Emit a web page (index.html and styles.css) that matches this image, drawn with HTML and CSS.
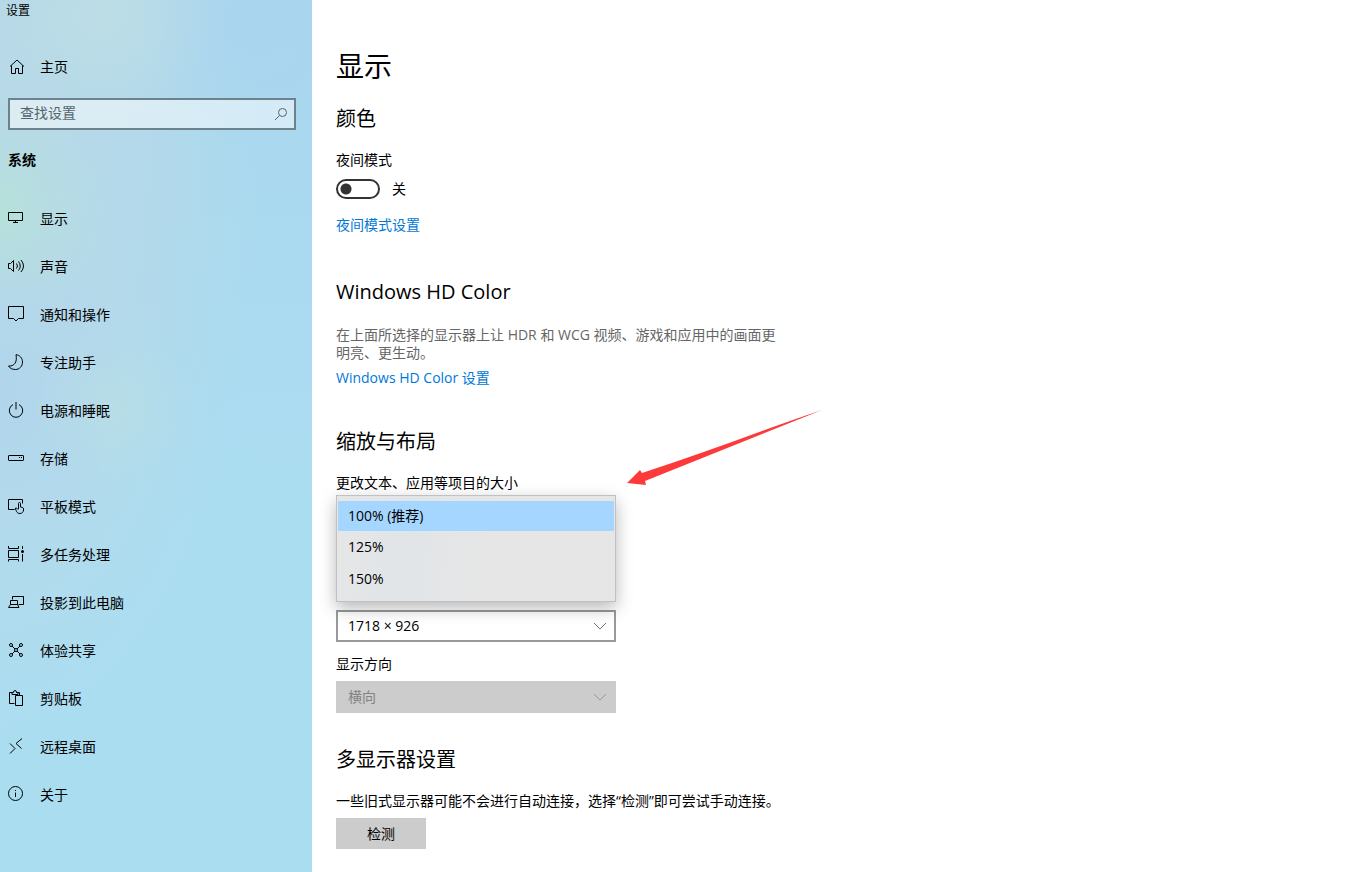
FILE: index.html
```html
<!DOCTYPE html>
<html lang="zh-CN">
<head>
<meta charset="utf-8">
<meta name="viewport" content="width=device-width, initial-scale=1">
<title>设置</title>
<link rel="stylesheet" href="styles.css">
</head>
<body>
<div class="app">
  <aside class="sidebar">
    <div class="window-title">设置</div>
    <a class="nav-link home" href="#">
      <svg class="icon" viewBox="0 0 18 18"><path d="M2 8.500L9 2l7 6.500M3.500 7.500v8h4v-5h3v5h4v-8"/></svg>
      <span>主页</span>
    </a>
    <div class="search">
      <input class="search-input" type="text" placeholder="查找设置" aria-label="查找设置">
      <svg class="search-icon" viewBox="0 0 14 14"><circle cx="8.500" cy="5.500" r="4"/><path d="M5.500 8.500L1 13"/></svg>
    </div>
    <h2 class="nav-heading">系统</h2>
    <nav class="nav">
      <a class="nav-link" href="#">
        <svg class="icon" viewBox="0 0 18 18"><path d="M.5 2.500h14v8H.5zM7.500 10.500v2M5 12.500h5"/></svg>
        <span>显示</span>
      </a>
      <a class="nav-link" href="#">
        <svg class="icon" viewBox="0 0 18 18"><path d="M.5 5.500h2l3-3v11l-3-3h-2zM8.500 5.500q2 2.500 0 5M10.500 3.500q3.500 4.500 0 9M13 2q5 6 0 12"/></svg>
        <span>声音</span>
      </a>
      <a class="nav-link" href="#">
        <svg class="icon" viewBox="0 0 18 18"><path d="M.5.5h15v12h-5L8 15l-2.500-2.500h-5z"/></svg>
        <span>通知和操作</span>
      </a>
      <a class="nav-link" href="#">
        <svg class="icon" viewBox="0 0 18 18"><path d="M8 .7C12 1 14.500 4.500 14.500 8c0 4.200-3 7.500-7 7.500-3 0-5.500-1-7-3.500 5.500.5 9-3.500 7.500-11.300z"/></svg>
        <span>专注助手</span>
      </a>
      <a class="nav-link" href="#">
        <svg class="icon" viewBox="0 0 18 18"><path d="M5 2.600A6.700 6.700 0 1 0 11 2.600M8 0v7.500"/></svg>
        <span>电源和睡眠</span>
      </a>
      <a class="nav-link" href="#">
        <svg class="icon" viewBox="0 0 18 18"><rect x=".5" y="5.500" width="15" height="5" rx=".5"/><path d="M11 7.500h1M13 7.500h1"/></svg>
        <span>存储</span>
      </a>
      <a class="nav-link" href="#">
        <svg class="icon" viewBox="0 0 18 18"><path d="M6.500 11.500h-6v-10h14v4M10.500 11V5.500q0-1 1-1t1 1V9l2 .5q1 .3 1 1.500v1c0 2-1.500 3.500-3.500 3.500s-3-1-3.500-2l-1-2.500q-.3-1.500 1-1l1.500 1.500"/></svg>
        <span>平板模式</span>
      </a>
      <a class="nav-link" href="#">
        <svg class="icon" viewBox="0 0 18 18"><path d="M.5 0v2.500h10V0M.5 4.500h10v7H.5zM.5 15.500v-2h10v2M14.500 0v3M14.500 8v7.500"/><circle class="solid" cx="14.500" cy="5.500" r="1.500"/></svg>
        <span>多任务处理</span>
      </a>
      <a class="nav-link" href="#">
        <svg class="icon" viewBox="0 0 18 18"><path d="M4.500 5.500v-3h11v8h-5M2.500 10.500v-4h7v4M.5 13.500l2-3h7l1.500 3z"/></svg>
        <span>投影到此电脑</span>
      </a>
      <a class="nav-link" href="#">
        <svg class="icon" viewBox="0 0 18 18"><circle cx="3" cy="3" r="1.500"/><circle cx="13" cy="3" r="1.500"/><circle cx="3" cy="13" r="1.500"/><circle cx="13" cy="13" r="1.500"/><circle cx="8" cy="8" r="1.500"/><path d="M4 4l3 3M12 4L9 7M4 12l3-3M12 12L9 9"/></svg>
        <span>体验共享</span>
      </a>
      <a class="nav-link" href="#">
        <svg class="icon" viewBox="0 0 18 18"><path d="M6.500 13.500h-5v-11h3M8.500 2.500h3v3M4 4.500v-2h1.500q0-2 1.500-2t1.500 2H10v2zM7.500 5.500h7v10h-7z"/></svg>
        <span>剪贴板</span>
      </a>
      <a class="nav-link" href="#">
        <svg class="icon" viewBox="0 0 18 18"><path d="M2 5.500L7 10.500l-5 5M14 .5L8 5.500l5.500 5"/></svg>
        <span>远程桌面</span>
      </a>
      <a class="nav-link" href="#">
        <svg class="icon" viewBox="0 0 18 18"><circle cx="7.500" cy="7.500" r="7"/><path d="M7.500 6.500V11M7.500 4v1"/></svg>
        <span>关于</span>
      </a>
    </nav>
  </aside>

  <main class="content">
    <h1 class="page-title">显示</h1>

    <section class="section">
      <h2 class="section-title">颜色</h2>
      <label class="text" for="night">夜间模式</label>
      <div class="toggle-row">
        <input class="toggle" id="night" type="checkbox" role="switch">
        <span class="text">关</span>
      </div>
      <a class="link" href="#">夜间模式设置</a>
    </section>

    <section class="section hdr">
      <h2 class="section-title">Windows HD Color</h2>
      <p class="text muted">在上面所选择的显示器上让 HDR 和 WCG 视频、游戏和应用中的画面更明亮、更生动。</p>
      <a class="link" href="#">Windows HD Color 设置</a>
    </section>

    <section class="section scale">
      <h2 class="section-title">缩放与布局</h2>
      <label class="text" for="scale">更改文本、应用等项目的大小</label>
      <div class="scale-field">
        <select class="options" id="scale" size="3">
          <option class="option" selected>100% (推荐)</option>
          <option class="option">125%</option>
          <option class="option">150%</option>
        </select>
        <svg class="arrow" viewBox="0 0 196 78"><path d="M0 74L13 61l2 3C75 45 130 23 195 1L18 72l1 4z"/></svg>
      </div>
      <div class="dropdown">
        <select class="select" aria-label="1718 × 926"><option>1718 × 926</option></select>
        <svg class="chevron" viewBox="0 0 14 8"><path d="M1 1l6 6 6-6"/></svg>
      </div>
      <label class="text orientation-label" for="orientation">显示方向</label>
      <div class="dropdown disabled">
        <select class="select" id="orientation" disabled><option>横向</option></select>
        <svg class="chevron" viewBox="0 0 14 8"><path d="M1 1l6 6 6-6"/></svg>
      </div>
    </section>

    <section class="section multi">
      <h2 class="section-title">多显示器设置</h2>
      <p class="text">一些旧式显示器可能不会进行自动连接，选择“检测”即可尝试手动连接。</p>
      <button class="button" type="button">检测</button>
    </section>
  </main>
</div>
</body>
</html>
```
FILE: styles.css
```css
* {
  box-sizing: border-box;
}

body {
  margin: 0;
  background: #fff;
  color: #000;
  font-family: "Open Sans", "Noto Sans CJK SC", sans-serif;
  font-size: 14px;
  line-height: 18px;
}

h1, h2, p {
  margin: 0;
  font-weight: 400;
}

input, select, button {
  font: inherit;
  color: inherit;
  margin: 0;
  border-radius: 0;
}

.app {
  display: flex;
  min-height: 100vh;
}

/* Sidebar */
.sidebar {
  flex: 0 0 312px;
  background:
    radial-gradient(circle at 0 210px, #b5e3d6cc 0, #b5e3d650 50px, #b5e3d600 110px),
    radial-gradient(circle at 105px 15px, #bfdfe5cc 0, #bfdfe570 50px, #bfdfe500 110px),
    radial-gradient(circle at 115px 410px, #b9dfe4cc 0, #b9dfe450 35px, #b9dfe400 80px),
    radial-gradient(circle at 260px 30px, #aad4efcc 0, #aad4ef00 120px),
    radial-gradient(ellipse 130px 160px at 0 390px, #b0d5edcc 0, #b0d5ed00 100%),
    radial-gradient(ellipse 260px 580px at 0 160px, #b7d9e8 20%, #b7d9e8a0 60%, #b7d9e800 100%),
    linear-gradient(#a9d7ee, #abddf1 60%);
}

.window-title {
  padding: 2px 6px 0;
  font-size: 12px;
}

.nav-link {
  display: flex;
  align-items: center;
  gap: 14px;
  height: 48px;
  padding: 0 8px;
  color: #000;
  text-decoration: none;
}

.home {
  margin-top: 23px;
}

.icon {
  flex: none;
  width: 18px;
  height: 18px;
  fill: none;
  stroke: #000;
}

.solid {
  fill: #000;
  stroke: none;
}

.search {
  display: grid;
  align-items: center;
  margin: 7px 16px 0 8px;
}

.search-input {
  grid-area: 1 / 1;
  width: 100%;
  height: 32px;
  padding: 0 34px 3px 10px;
  border: 2px solid #6c828d;
  background: #ffffff80;
}

.search-input::placeholder {
  color: #53646d;
  opacity: 1;
}

.search-icon {
  grid-area: 1 / 1;
  justify-self: end;
  width: 14px;
  height: 14px;
  margin-right: 8px;
  fill: none;
  stroke: #53646d;
}

.nav-heading {
  margin: 21px 8px 26px;
  font-size: 14px;
  font-weight: 700;
}

/* Content */
.content {
  flex: 1;
  min-width: 0;
  padding: 47px 24px 23px;
}

.page-title {
  font-size: 28px;
  line-height: 38px;
}

.section {
  display: flex;
  flex-direction: column;
  align-items: flex-start;
  max-width: 446px;
  margin-top: 20px;
}

.section-title {
  margin-bottom: 18px;
  font-size: 20px;
  line-height: 28px;
}

.muted {
  color: #666;
}

.link {
  color: #0078d7;
  text-decoration: none;
}

.toggle-row {
  display: flex;
  align-items: center;
  gap: 12px;
  margin: 10px 0 17px;
}

.toggle {
  appearance: none;
  width: 44px;
  height: 20px;
  border: 2px solid #333;
  border-radius: 10px;
  background: radial-gradient(circle at 8px 8px, #333 5px, transparent 6px);
}

.hdr {
  margin-top: 44px;
}

.hdr .section-title {
  margin-bottom: 20px;
}

.hdr .link {
  margin-top: 7px;
}

.scale {
  margin-top: 41px;
}

.scale-field {
  position: relative;
  z-index: 1;
  width: 280px;
  margin: 3px 0 8px;
}

.options {
  display: block;
  width: 100%;
  height: 107px;
  padding: 5px 1px;
  overflow: hidden;
  border: 1px solid #bfc1c2;
  outline: 0;
  background: linear-gradient(100deg, #e6e6e6, #e1e5e8 25%, #e6e6e6 55%);
  box-shadow: 0 6px 16px #00000048;
}

.option {
  height: 30px;
  min-height: 30px;
  margin-bottom: 2px;
  padding: 4px 10px 0;
}

.option:checked {
  background: linear-gradient(#a5d6ff, #a5d6ff);
  color: #000;
}

.arrow {
  position: absolute;
  left: 291px;
  bottom: 115px;
  width: 196px;
  height: 78px;
  fill: #fc3a3a;
}

.dropdown {
  display: grid;
  align-items: center;
  width: 280px;
}

.select {
  grid-area: 1 / 1;
  appearance: none;
  width: 100%;
  height: 32px;
  padding: 0 34px 0 10px;
  border: 2px solid #999;
  background: #fff;
}

.chevron {
  grid-area: 1 / 1;
  justify-self: end;
  width: 14px;
  height: 8px;
  margin-right: 9px;
  fill: none;
  stroke: #777;
  pointer-events: none;
}

.disabled .select {
  border-color: #ccc;
  background: #ccc;
  color: #838383;
  opacity: 1;
}

.disabled .chevron {
  stroke: #999;
}

.orientation-label {
  margin: 13px 0 8px;
}

.multi {
  margin-top: 33px;
}

.button {
  height: 31px;
  min-width: 90px;
  margin-top: 8px;
  padding: 0 16px;
  border: 0;
  background: #ccc;
}
```
